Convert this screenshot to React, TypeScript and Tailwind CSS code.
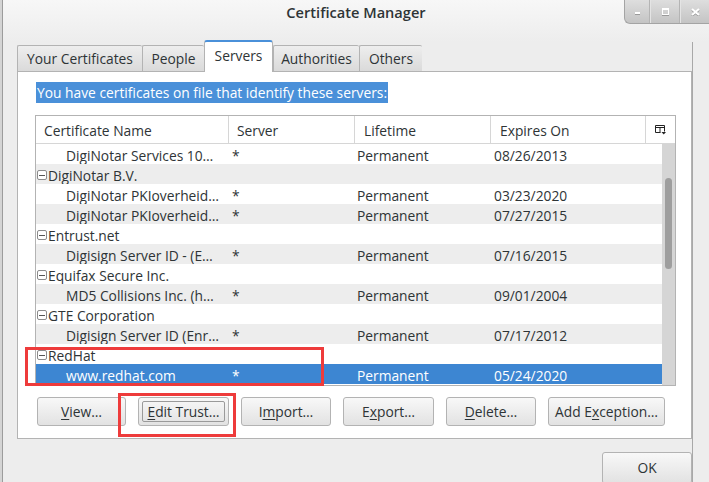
import { ReactNode } from 'react';

type Row =
    | { kind: 'group'; name: string }
    | { kind: 'cert'; name: string; server: string; lifetime: string; expires: string; selected?: boolean };

const rows: Row[] = [
    { kind: 'cert', name: 'DigiNotar Services 10…', server: '*', lifetime: 'Permanent', expires: '08/26/2013' },
    { kind: 'group', name: 'DigiNotar B.V.' },
    { kind: 'cert', name: 'DigiNotar PKIoverheid…', server: '*', lifetime: 'Permanent', expires: '03/23/2020' },
    { kind: 'cert', name: 'DigiNotar PKIoverheid…', server: '*', lifetime: 'Permanent', expires: '07/27/2015' },
    { kind: 'group', name: 'Entrust.net' },
    { kind: 'cert', name: 'Digisign Server ID - (E…', server: '*', lifetime: 'Permanent', expires: '07/16/2015' },
    { kind: 'group', name: 'Equifax Secure Inc.' },
    { kind: 'cert', name: 'MD5 Collisions Inc. (h…', server: '*', lifetime: 'Permanent', expires: '09/01/2004' },
    { kind: 'group', name: 'GTE Corporation' },
    { kind: 'cert', name: 'Digisign Server ID (Enr…', server: '*', lifetime: 'Permanent', expires: '07/17/2012' },
    { kind: 'group', name: 'RedHat' },
    { kind: 'cert', name: 'www.redhat.com', server: '*', lifetime: 'Permanent', expires: '05/24/2020', selected: true },
];

const tabs = [
    { label: 'Your Certificates', w: 'w-[125px]' },
    { label: 'People', w: 'w-[62px]' },
    { label: 'Servers', w: 'w-[69px]', active: true },
    { label: 'Authorities', w: 'w-[86px]' },
    { label: 'Others', w: 'w-[63px]' },
];

function Button({ w, children, focused }: { w: string; children: ReactNode; focused?: boolean }) {
    return (
        <div className={`${w} h-[29px] p-[3px] rounded-[3px] border border-[#b3b3b3] bg-gradient-to-b from-[#f8f8f8] to-[#e2e2e2] shadow-[0_1px_0_rgba(255,255,255,0.8)]`}>
            <div className={`h-full flex items-center justify-center pt-px rounded-[2px] border ${focused ? 'border-[#9a9a9a]' : 'border-transparent'}`}>
                {children}
            </div>
        </div>
    );
}

function Minus() {
    return (
        <span className="w-[10px] h-[10px] mt-[6px] mx-px border border-[#8c8c8c] rounded-[2px] bg-white flex items-center justify-center">
            <span className="w-[6px] h-px bg-[#555]" />
        </span>
    );
}

export default function App() {
    return (
        <div className="w-[709px] h-[482px] bg-[#ededed] flex overflow-hidden relative font-['Open_Sans',sans-serif] text-[13.8px] text-[#2e3436]">
            {/* left window edge */}
            <div className="w-[3px] bg-[#d4d4d4] border-r border-[#9c9c9c]" />

            <div className="flex-1 flex flex-col">
                <div className="h-[42px] shrink-0 relative bg-gradient-to-b from-[#f7f7f7] to-[#ededed] flex justify-center pt-[2px]">
                    <span className="text-[14.6px] font-semibold text-[#2e3436] leading-[20px]">Certificate Manager</span>
                    <div className="absolute top-0 right-0 w-[85px] h-[24px] flex rounded-bl-[6px] border-l border-b border-[#a4a4a4] bg-gradient-to-b from-[#dedede] to-[#c4c4c4] overflow-hidden">
                        <div className="w-[25px] flex items-center justify-center border-r border-[#b4b4b4]">
                            <span className="w-[5px] h-[2px] mt-[3px] bg-white shadow-[0_1px_0_#9a9a9a]" />
                        </div>
                        <div className="w-[30px] flex items-center justify-center border-r border-[#b4b4b4] border-l border-l-[#e4e4e4]">
                            <span className="w-[7px] h-[7px] border border-white border-t-2 shadow-[0_1px_0_#9a9a9a]" />
                        </div>
                        <div className="flex-1 flex items-center justify-center border-l border-[#e4e4e4]">
                            <svg width="9" height="8" viewBox="0 0 9 8">
                                <path d="M1 1 L8 7 M8 1 L1 7" stroke="#9a9a9a" strokeWidth="2" transform="translate(0,1)" />
                                <path d="M1 1 L8 7 M8 1 L1 7" stroke="#ffffff" strokeWidth="2" />
                            </svg>
                        </div>
                    </div>
                </div>

                <div className="flex-1 flex">
                    <div className="w-[689px] pl-[14px] flex flex-col">
                        <div className="h-[29px] shrink-0 flex items-end">
                            {tabs.map((t) =>
                                t.active ? (
                                    <div key={t.label} className={`${t.w} h-[32px] -mb-px relative z-10 bg-white border-x border-[#b3b3b3] border-t-2 border-t-[#4a90d9] rounded-t-[3px] flex justify-center pt-[4px]`}>
                                        {t.label}
                                    </div>
                                ) : (
                                    <div key={t.label} className={`${t.w} h-[26px] bg-gradient-to-b from-[#eeeeee] to-[#dadada] border-t border-l last:border-r border-[#b3b3b3] rounded-t-[2px] flex justify-center pt-[3px]`}>
                                        {t.label}
                                    </div>
                                )
                            )}
                            <div className="flex-1" />
                        </div>

                        <div className="h-[368px] shrink-0 bg-white border border-[#b3b3b3] pl-[17px] pt-[10px] flex flex-col">
                            <div className="self-start ml-px px-px h-[21px] leading-[22px] bg-[#4a90d9] text-white whitespace-nowrap">
                                You have certificates on file that identify these servers:
                            </div>

                            <div className="mt-[12px] w-[641px] border border-[#b3b3b3] flex flex-col">
                                <div className="h-[28px] flex border-b border-[#d6d6d6] leading-[30px]">
                                    <div className="w-[192px] pl-[8px]">Certificate Name</div>
                                    <div className="w-[126px] pl-[8px] border-l border-[#d6d6d6]">Server</div>
                                    <div className="w-[136px] pl-[9px] border-l border-[#d6d6d6]">Lifetime</div>
                                    <div className="w-[155px] pl-[9px] border-l border-[#d6d6d6]">Expires On</div>
                                    <div className="flex-1 border-l border-[#d6d6d6] flex items-center justify-center">
                                        <svg width="11" height="10" viewBox="0 0 11 10">
                                            <path d="M0.5 0.5 H9.5 V6.5 M0.5 0.5 V7.5 H5.5 M0.5 2.5 H9.5 M5 2.5 V7.5" fill="none" stroke="#222" strokeWidth="1" />
                                            <path d="M6.5 7 H11 L8.75 9.5 Z" fill="#222" />
                                        </svg>
                                    </div>
                                </div>

                                <div className="h-[241px] flex">
                                    <div className="w-[626px] flex flex-col">
                                        {rows.map((r, i) => {
                                            const bg = r.kind === 'cert' && r.selected ? 'bg-[#3d86d2] text-white' : i % 2 ? 'bg-[#ededed]' : 'bg-white';
                                            return (
                                                <div key={i} className={`h-[20px] shrink-0 leading-[24px] overflow-hidden flex whitespace-nowrap ${bg}`}>
                                                    {r.kind === 'group' ? (
                                                        <div className="flex items-start">
                                                            <Minus />
                                                            <span>{r.name}</span>
                                                        </div>
                                                    ) : (
                                                        <>
                                                            <div className="w-[192px] pl-[30px] overflow-hidden">{r.name}</div>
                                                            <div className="w-[126px] pl-[4px]">{r.server}</div>
                                                            <div className="w-[136px] pl-[3px]">{r.lifetime}</div>
                                                            <div className="w-[155px] pl-[4px]">{r.expires}</div>
                                                        </>
                                                    )}
                                                </div>
                                            );
                                        })}
                                    </div>
                                    <div className="flex-1 bg-[#d5d5d5] pt-[34px] pl-[3px]">
                                        <div className="w-[7px] h-[91px] rounded-full bg-[#9e9e9e]" />
                                    </div>
                                </div>
                            </div>

                            <div className="mt-[11px] ml-[2px] flex gap-[12px]">
                                <Button w="w-[89px]"><span><u className="underline-offset-2">V</u>iew…</span></Button>
                                <Button w="w-[91px]" focused><span><u className="underline-offset-2">E</u>dit Trust…</span></Button>
                                <Button w="w-[90px]"><span>I<u className="underline-offset-2">m</u>port…</span></Button>
                                <Button w="w-[91px]"><span>E<u className="underline-offset-2">x</u>port…</span></Button>
                                <Button w="w-[90px]"><span><u className="underline-offset-2">D</u>elete…</span></Button>
                                <Button w="w-[117px]"><span>Add E<u className="underline-offset-2">x</u>ception…</span></Button>
                            </div>
                        </div>

                        <div className="mt-[13px] flex justify-end">
                            <div className="w-[90px] h-[32px] rounded-[3px] border border-[#b3b3b3] bg-gradient-to-b from-[#f8f8f8] to-[#e2e2e2] flex items-center justify-center">
                                OK
                            </div>
                        </div>
                    </div>
                    <div className="w-px bg-[#a8a8a8]" />
                    <div className="flex-1" />
                </div>
            </div>

            {/* red annotation boxes */}
            <div className="absolute left-[25px] top-[347px] w-[299px] h-[39px] border-[3px] border-[#ee3b3b]" />
            <div className="absolute left-[118px] top-[393px] w-[118px] h-[44px] border-[3px] border-[#ee3b3b]" />
        </div>
    );
}
